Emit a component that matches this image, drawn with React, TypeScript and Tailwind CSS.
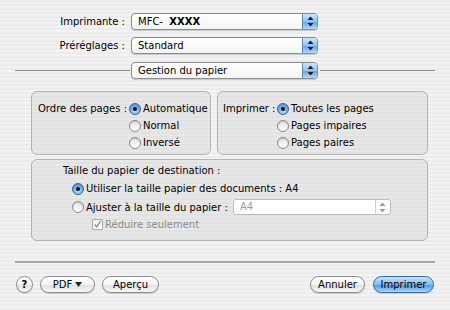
import React from 'react';

const stripes =
  'bg-[repeating-linear-gradient(0deg,#ececec_0px,#ececec_2px,#f3f3f3_2px,#f3f3f3_4px)]';

const Arrows = ({ color = '#1d1d1d' }: { color?: string }) => (
  <svg width="7" height="11" viewBox="0 0 7 11">
    <path d="M3.5 0.5 L6.5 4 L0.5 4 Z" fill={color} />
    <path d="M3.5 10.5 L6.5 7 L0.5 7 Z" fill={color} />
  </svg>
);

const Popup = ({ children, w }: { children: React.ReactNode; w: string }) => (
  <div
    className={`${w} flex h-[17px] overflow-hidden rounded-[4px] border border-[#8c8c8c] bg-[linear-gradient(#ffffff,#f4f4f4)] shadow-[0_1px_1px_rgba(0,0,0,0.18)]`}
  >
    <span className="flex-1 whitespace-nowrap pl-[6px] leading-[15px]">{children}</span>
    <div className="flex w-[15px] items-center justify-center border-l border-[#5c84b6] bg-[linear-gradient(#cbe5fb,#93c3f1_50%,#62a2e6_52%,#b3d9fb)]">
      <Arrows />
    </div>
  </div>
);

const Radio = ({ on }: { on?: boolean }) =>
  on ? (
    <span className="flex h-[12px] w-[12px] shrink-0 items-center justify-center rounded-full border border-[#36629a] bg-[radial-gradient(circle_at_50%_75%,#b4dcfc,#5796e0_75%)]">
      <span className="h-[4px] w-[4px] rounded-full bg-[#111]" />
    </span>
  ) : (
    <span className="h-[12px] w-[12px] shrink-0 rounded-full border border-[#8a8a8a] bg-[linear-gradient(#e2e2e2,#ffffff)] shadow-[inset_0_1px_1px_rgba(0,0,0,0.15)]" />
  );

const Option = ({ on, label, h = 'h-[15px]' }: { on?: boolean; label: string; h?: string }) => (
  <div className={`flex ${h} items-center gap-[2px] whitespace-nowrap`}>
    <Radio on={on} />
    <span>{label}</span>
  </div>
);

const Button = ({ children, w, primary }: { children: React.ReactNode; w: string; primary?: boolean }) => (
  <div
    className={`${w} flex h-[17px] items-center justify-center rounded-full border shadow-[0_1px_1px_rgba(0,0,0,0.15)] ${
      primary
        ? 'border-[#3b6aa5] bg-[linear-gradient(#c4e2fc,#86bdf0_50%,#4f95e2_52%,#a9d6fb)]'
        : 'border-[#8a8a8a] bg-[linear-gradient(#ffffff,#f3f3f3_50%,#e0e0e0_52%,#f7f7f7)]'
    }`}
  >
    {children}
  </div>
);

const panel =
  'rounded-[6px] border border-[#b3b3b3] bg-[repeating-linear-gradient(0deg,#e2e2e2_0px,#e2e2e2_2px,#e7e7e7_2px,#e7e7e7_4px)]';

export default function App() {
  return (
    <div
      className={`flex h-[310px] w-[450px] flex-col pt-[13px] text-[10px] text-black ${stripes}`}
      style={{ fontFamily: '"DejaVu Sans", Verdana, sans-serif' }}
    >
      <div className="flex h-[17px] items-center">
        <span className="w-[131px] pr-[6px] text-right whitespace-nowrap">Imprimante :</span>
        <Popup w="w-[187px]">
          MFC-&nbsp; <b>XXXX</b>
        </Popup>
      </div>
      <div className="mt-[7px] flex h-[17px] items-center">
        <span className="w-[131px] pr-[6px] text-right whitespace-nowrap">Préréglages :</span>
        <Popup w="w-[187px]">Standard</Popup>
      </div>
      <div className="mt-[8px] flex h-[17px] items-center pl-[15px]">
        <div className="mr-[1px] h-px w-[115px] bg-[#8f8f8f]" />
        <Popup w="w-[187px]">Gestion du papier</Popup>
        <div className="ml-[2px] h-px w-[115px] bg-[#8f8f8f]" />
      </div>

      <div className="mt-[12px] flex gap-[6px] pl-[31px]">
        <div className={`flex h-[64px] w-[180px] pt-[8px] pl-[6px] ${panel}`}>
          <span className="h-[17px] w-[91px] shrink-0 whitespace-nowrap leading-[17px]">Ordre des pages :</span>
          <div className="flex flex-col">
            <Option on label="Automatique" h="h-[17px]" />
            <Option label="Normal" h="h-[17px]" />
            <Option label="Inversé" h="h-[17px]" />
          </div>
        </div>
        <div className={`flex h-[64px] w-[211px] pt-[8px] pl-[5px] ${panel}`}>
          <span className="h-[17px] w-[54px] shrink-0 whitespace-nowrap leading-[17px]">Imprimer :</span>
          <div className="flex flex-col">
            <Option on label="Toutes les pages" h="h-[17px]" />
            <Option label="Pages impaires" h="h-[17px]" />
            <Option label="Pages paires" h="h-[17px]" />
          </div>
        </div>
      </div>

      <div className={`mt-[4px] ml-[31px] flex h-[82px] w-[397px] flex-col pt-[3px] pl-[31px] ${panel}`}>
        <div className="h-[15px] leading-[15px]">Taille du papier de destination :</div>
        <div className="mt-[3px] pl-[9px]">
          <Option on label="Utiliser la taille papier des documents : A4" />
        </div>
        <div className="mt-[3px] flex items-center pl-[9px]">
          <Option label="Ajuster à la taille du papier :" />
          <div className="ml-[5px] flex h-[16px] w-[158px] overflow-hidden rounded-[3px] border border-[#bdbdbd] bg-white">
            <span className="flex-1 pl-[6px] leading-[14px] text-[#9a9a9a]">A4</span>
            <div className="flex w-[15px] items-center justify-center border-l border-[#d0d0d0]">
              <Arrows color="#9a9a9a" />
            </div>
          </div>
        </div>
        <div className="mt-[2px] flex h-[15px] items-center gap-[2px] pl-[29px] text-[#8c8c8c]">
          <span className="flex h-[11px] w-[11px] items-center justify-center rounded-[1px] border border-[#a9a9a9] bg-[linear-gradient(#f0f0f0,#ffffff)]">
            <svg width="11" height="11" viewBox="0 0 11 11">
              <path d="M2 5.5 L4.5 8.5 L9.5 1" stroke="#8a8a8a" strokeWidth="1.5" fill="none" />
            </svg>
          </span>
          <span>Réduire seulement</span>
        </div>
      </div>

      <div className="mt-[20px] ml-[15px] h-[2px] w-[420px] bg-[#a6a6a6]" />

      <div className="mt-[13px] flex items-center pl-[16px]">
        <Button w="w-[17px]">
          <span className="font-bold">?</span>
        </Button>
        <div className="ml-[7px]">
          <Button w="w-[55px]">
            <span className="flex items-center gap-[3px]">
              PDF
              <svg width="7" height="5" viewBox="0 0 7 5">
                <path d="M0 0 L7 0 L3.5 5 Z" fill="#222" />
              </svg>
            </span>
          </Button>
        </div>
        <div className="ml-[7px]">
          <Button w="w-[57px]">Aperçu</Button>
        </div>
        <div className="ml-[151px]">
          <Button w="w-[55px]">Annuler</Button>
        </div>
        <div className="ml-[8px]">
          <Button w="w-[61px]" primary>
            Imprimer
          </Button>
        </div>
      </div>
    </div>
  );
}
